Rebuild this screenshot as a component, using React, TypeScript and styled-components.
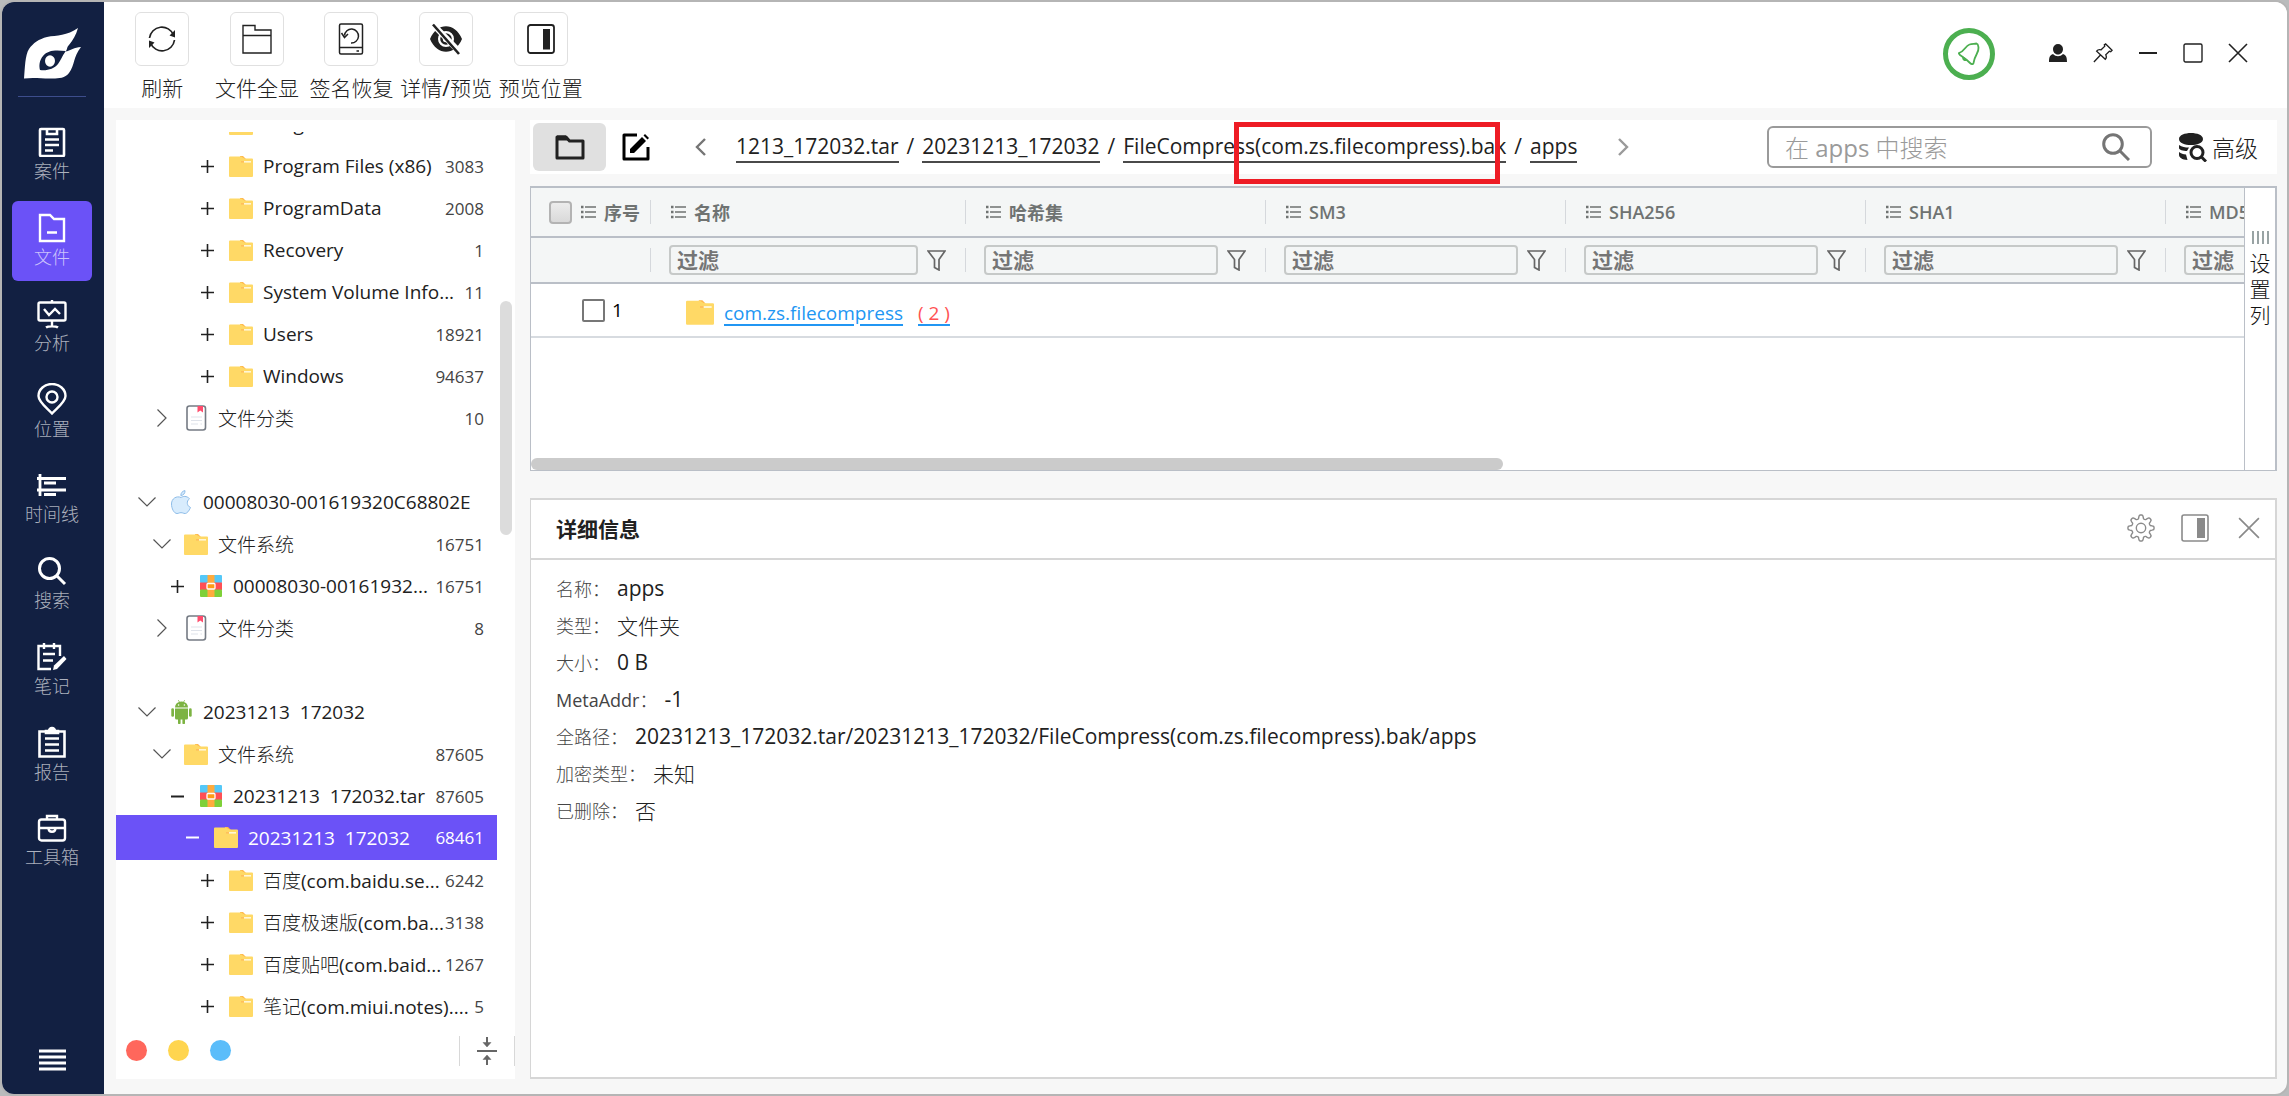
import React from "react";
import styled, { createGlobalStyle, css } from "styled-components";

const Global = createGlobalStyle`
  * { box-sizing: border-box; }
  html, body, #root { height: 100%; margin: 0; }
  body {
    background: #b9bbbc;
    font-family: "Open Sans", "Noto Sans CJK SC Light", "Noto Sans CJK SC", sans-serif;
    font-weight: 400;
    font-size: 19px;
    color: #212121;
  }
  button, input { font: inherit; color: inherit; }
  button { border: 0; background: none; padding: 0; cursor: pointer; }
  svg { display: block; flex: none; }
`;

const Window = styled.div`
  height: 100vh;
  min-height: 1000px;
  border: 2px solid #b5b5b5;
  border-radius: 14px;
  overflow: hidden;
  display: flex;
  background: #f7f7f7;
`;

/* ---------- left navigation ---------- */
const Sidebar = styled.nav`
  width: 102px;
  flex: none;
  padding-right: 2px;
  background: #122042;
  color: #fff;
  display: flex;
  flex-direction: column;
  align-items: center;
`;
const Brand = styled.div`
  width: 68px;
  height: 95px;
  padding: 25px 4px 0 5px;
  border-bottom: 1px solid #3d4d8c;
`;
const NavList = styled.div`
  margin-top: 18px;
  width: 80px;
  height: 766px;
  display: flex;
  flex-direction: column;
  justify-content: space-between;
`;
const NavItem = styled.button<{ $active?: boolean }>`
  height: 80px;
  padding-top: 2px;
  border-radius: 6px;
  display: flex;
  flex-direction: column;
  align-items: center;
  justify-content: center;
  background: ${(p) => (p.$active ? "#6b52f7" : "transparent")};
  color: #fff;
`;
const NavLabel = styled.span`
  font-size: 18px;
  line-height: 28px;
  color: rgba(255, 255, 255, 0.66);
`;
const MenuButton = styled.button`
  margin: auto 0 23px;
  color: #fff;
`;

/* ---------- top bar ---------- */
const Content = styled.div`
  flex: 1;
  min-width: 0;
  display: flex;
  flex-direction: column;
`;
const TopBar = styled.header`
  height: 106px;
  flex: none;
  background: #fff;
  padding: 10px 39px 0 11px;
  display: flex;
  justify-content: space-between;
`;
const Tools = styled.div`
  width: 473px;
  display: grid;
  grid-template-columns: repeat(5, 1fr);
`;
const Tool = styled.button`
  display: flex;
  flex-direction: column;
  align-items: center;
  font-size: 21px;
  line-height: 30px;
  white-space: nowrap;
`;
const ToolBox = styled.span`
  width: 54px;
  height: 54px;
  margin-bottom: 7px;
  border: 1px solid #e0e0e0;
  border-radius: 6px;
  display: grid;
  place-items: center;
`;
const WindowTools = styled.div`
  display: flex;
  align-items: center;
  height: 82px;
  gap: 25px;
`;
const Bell = styled.button`
  width: 52px;
  height: 52px;
  margin: 2px 28px 0 0;
  border: 5px solid #4caf50;
  border-radius: 50%;
  display: grid;
  place-items: center;
  color: #4caf50;
`;
const IconButton = styled.button`
  min-width: 20px;
  display: grid;
  place-items: center;
`;

/* ---------- body ---------- */
const Body = styled.div`
  flex: 1;
  min-height: 0;
  padding: 12px 10px 15px 12px;
  display: flex;
  gap: 15px;
`;
const TreePanel = styled.aside`
  width: 399px;
  flex: none;
  background: #fff;
  padding-top: 12px;
  display: flex;
  flex-direction: column;
`;
const TreeArea = styled.div`
  flex: 1;
  min-height: 0;
  display: flex;
  overflow: hidden;
`;
const TreeList = styled.div`
  width: 381px;
  margin-top: -29px;
`;
const TreeRow = styled.div<{ $level: number; $active?: boolean }>`
  height: 42px;
  padding: 0 13px 0 ${(p) => 22 + p.$level * 15}px;
  display: flex;
  align-items: center;
  white-space: pre;
  ${(p) =>
    p.$active &&
    css`
      height: 45px;
      margin: -2px 0 -1px;
      background: #6b52f7;
      color: #fff;
    `}
`;
const Spacer = styled.div`
  height: 42px;
`;
const Toggle = styled.button`
  width: 18px;
  margin-right: 13px;
  display: grid;
  place-items: center;
`;
const IconSlot = styled.span`
  width: 24px;
  margin-right: 10px;
  display: grid;
  place-items: center;
`;
const Count = styled.span<{ $active?: boolean }>`
  margin-left: auto;
  font-size: 17px;
  color: ${(p) => (p.$active ? "#fff" : "#444")};
`;
const ScrollTrack = styled.div`
  width: 12px;
  margin-left: 3px;
  padding-top: 169px;
`;
const ScrollThumb = styled.div`
  height: 234px;
  border-radius: 6px;
  background: #dcdcdc;
`;
const TreeFooter = styled.div`
  height: 46px;
  flex: none;
  padding: 3px 0 0 10px;
  display: flex;
  align-items: flex-start;
`;
const Dots = styled.div`
  display: flex;
  gap: 21px;
  padding-top: 4px;
`;
const Dot = styled.span<{ $color: string }>`
  width: 21px;
  height: 21px;
  border-radius: 50%;
  background: ${(p) => p.$color};
`;
const Collapse = styled.button`
  margin-left: auto;
  width: 56px;
  height: 30px;
  border: solid #d8d8d8;
  border-width: 0 1px;
  display: grid;
  place-items: center;
`;

const Main = styled.main`
  flex: 1;
  min-width: 0;
  display: flex;
  flex-direction: column;
`;
const PathBar = styled.div`
  position: relative;
  height: 54px;
  flex: none;
  padding: 0 19px 0 3px;
  background: #fff;
  display: flex;
  align-items: center;
`;
const FolderButton = styled.button`
  width: 73px;
  height: 48px;
  border-radius: 6px;
  background: #e0e0e0;
  display: grid;
  place-items: center;
`;
const EditButton = styled(IconButton)`
  margin: 0 40px 0 16px;
`;
const Crumbs = styled.div`
  margin: 0 36px 0 26px;
  display: flex;
  gap: 8px;
  font-size: 21px;
  line-height: 30px;
  white-space: nowrap;
`;
const Crumb = styled.a`
  color: inherit;
  text-decoration: none;
  border-bottom: 2px solid #4a4a4a;
`;
const Marker = styled.div`
  position: absolute;
  left: 704px;
  top: 2px;
  width: 266px;
  height: 62px;
  border: 5px solid #ee1c25;
  z-index: 2;
`;
const SearchBox = styled.label`
  width: 385px;
  height: 42px;
  margin-left: auto;
  padding: 0 20px 0 16px;
  border: 2px solid #9a9a9a;
  border-radius: 6px;
  display: flex;
  align-items: center;
`;
const SearchInput = styled.input`
  flex: 1;
  min-width: 0;
  border: 0;
  padding: 0;
  outline: 0;
  background: none;
  font-size: 24px;
  &::placeholder { color: #9a9a9a; opacity: 1; }
`;
const Advanced = styled.button`
  margin-left: 27px;
  display: flex;
  align-items: center;
  gap: 5px;
  font-size: 23px;
`;

/* ---------- grid ---------- */
const GridPanel = styled.section`
  height: 285px;
  margin: 12px 0 27px;
  flex: none;
  border: solid #babfc7;
  border-width: 2px 2px 1px 1px;
  background: #fff;
  display: flex;
`;
const GridBody = styled.div`
  flex: 1;
  min-width: 0;
  overflow: hidden;
  display: flex;
  flex-direction: column;
`;
const Table = styled.table`
  width: 1935px;
  table-layout: fixed;
  border-collapse: collapse;
`;
const HeadRow = styled.tr<{ $h: number }>`
  height: ${(p) => p.$h}px;
  background: #f4f6f6;
  border-bottom: 2px solid #babfc7;
`;
const Th = styled.th`
  padding: 0;
  font-family: "Open Sans", "Noto Sans CJK SC", sans-serif;
  font-size: 18px;
  font-weight: 600;
  color: #6f7372;
  text-align: left;
`;
const HeadCell = styled.div<{ $first?: boolean }>`
  height: 24px;
  padding-left: ${(p) => (p.$first ? 18 : 20)}px;
  display: flex;
  align-items: center;
  gap: 8px;
  white-space: nowrap;
  border-right: 1px solid #d5d8dc;
`;
const HeadCheck = styled.input`
  appearance: none;
  width: 23px;
  height: 23px;
  margin: 0 1px 0 0;
  border: 2px solid #b3b3b3;
  border-radius: 4px;
  background: linear-gradient(#ececec, #d9d9d9);
`;
const FilterCell = styled.div`
  height: 24px;
  padding: 0 19px 0 18px;
  display: flex;
  align-items: center;
  gap: 9px;
  border-right: 1px solid #d5d8dc;
`;
const FilterInput = styled.input`
  flex: 1;
  min-width: 0;
  height: 30px;
  padding: 0 6px;
  border: 2px solid #c6c9c8;
  border-radius: 4px;
  background: #f4f6f6;
  font-size: 21px;
  font-weight: 700;
  &::placeholder { color: #757575; opacity: 1; font-weight: 700; }
`;
const BodyRow = styled.tr`
  height: 54px;
  border-bottom: 2px solid #d7dbe0;
`;
const Td = styled.td`
  padding: 0;
`;
const IndexCell = styled.label`
  padding-left: 51px;
  display: flex;
  align-items: center;
  gap: 7px;
  color: #000;
  font-size: 19px;
`;
const RowCheck = styled.input`
  appearance: none;
  width: 23px;
  height: 23px;
  margin: 0;
  border: 2px solid #777;
  border-radius: 2px;
  background: #fff;
`;
const NameCell = styled.div`
  padding: 5px 0 0 35px;
  display: flex;
  align-items: center;
  gap: 10px;
  white-space: nowrap;
  font-size: 19px;
`;
const FileLink = styled.a`
  color: #2196f3;
  text-decoration: underline;
  text-decoration-thickness: 2px;
  text-underline-offset: 4px;
`;
const Hits = styled.span`
  margin-left: 5px;
  color: #ff5252;
  text-decoration: underline;
  text-decoration-color: #2196f3;
  text-decoration-thickness: 2px;
  text-underline-offset: 4px;
`;
const HScroll = styled.div`
  margin-top: auto;
  width: 972px;
  height: 12px;
  border-radius: 6px;
  background: #cbcbcb;
`;
const ColumnTab = styled.button`
  width: 31px;
  flex: none;
  padding-top: 43px;
  border-left: 1px solid #babfc7;
  display: flex;
  flex-direction: column;
  align-items: center;
  color: #111;
  font-size: 21px;
`;
const TabText = styled.span`
  width: 21px;
  margin-top: 6px;
  line-height: 26px;
`;

/* ---------- details ---------- */
const Details = styled.section`
  flex: 1;
  min-height: 0;
  border: 2px solid #d6d6d6;
  border-left-width: 1px;
  background: #fff;
`;
const DetailsHead = styled.div`
  height: 60px;
  padding: 0 12px 2px 25px;
  border-bottom: 2px solid #d6d6d6;
  display: flex;
  align-items: center;
  gap: 26px;
  color: #8a8a8a;
`;
const DetailsButton = styled(IconButton)`
  width: 28px;
`;
const Title = styled.h2`
  margin: 0 auto 0 0;
  font-family: "Open Sans", "Noto Sans CJK SC", sans-serif;
  font-size: 21px;
  font-weight: 700;
  color: #212121;
`;
const Fields = styled.dl`
  margin: 0;
  padding: 9px 25px;
`;
const Field = styled.div`
  height: 37px;
  display: flex;
  align-items: center;
  gap: 7px;
`;
const Term = styled.dt`
  font-size: 18px;
  color: #444;
`;
const Value = styled.dd`
  margin: 0;
  font-size: 21px;
`;

/* ---------- drawings ---------- */
type P = { children: React.ReactNode; w?: number; h?: number; box?: string; sw?: number };
const Svg = ({ children, w = 24, h = w, box = "0 0 24 24", sw = 2 }: P) => (
  <svg width={w} height={h} viewBox={box} fill="none" stroke="currentColor" strokeWidth={sw} aria-hidden="true">
    {children}
  </svg>
);

const Logo = () => (
  <Svg w={58} h={52} box="0 0 58 52" sw={0}>
    <path
      fill="#fff"
      fillRule="evenodd"
      d="M55 1C53 8 50 13 46 18C43 21 45 23 42 24.500C48 24 51 20 58 20C50 30 52 38 46 46C42 51 36 51.500 30 51.500C20 52 12 50 1 51.500C2 41 2 28 6 22C10 16 16 12 24 10C34 8 44 9 55 1ZM43 24C32 23 25 23 20 29C16 34 16 39 17 43C24 44 31 42 35 37C38 33 39 29 43 24Z"
    />
    <ellipse cx="27" cy="34" rx="5" ry="5.700" fill="#fff" />
  </Svg>
);

const FolderIcon = ({ w = 24 }: { w?: number }) => (
  <Svg w={w} h={w - 3} box="0 0 24 21" sw={0}>
    <path fill="#ffb74d" d="M11 0h3l3 3h-6z" />
    <path fill="#ffd966" d="M1 .5h11l3.500 2H23a1 1 0 0 1 1 1V20a1 1 0 0 1-1 1H1a1 1 0 0 1-1-1V1.500a1 1 0 0 1 1-1z" />
    <rect x="15" y="5" width="7" height="1.600" fill="#fff6d6" />
    <rect x="12" y="5" width="3" height="1.600" fill="#ffbe5c" />
  </Svg>
);
const ArchiveIcon = () => (
  <Svg w={22} box="0 0 22 22" sw={0}>
    <rect width="22" height="8" rx="1" fill="#55c8f8" />
    <rect y="7.500" width="22" height="7.500" fill="#ff4f55" />
    <rect y="14.500" width="22" height="7.500" rx="1" fill="#7ed038" />
    <rect x="7.500" width="7" height="22" fill="#ffab3d" />
    <rect x="7" y="8.500" width="8" height="5.500" rx="1" fill="#ff9b17" stroke="#fff" strokeWidth="1.300" />
  </Svg>
);
const BookIcon = () => (
  <Svg w={21} h={26} box="0 0 21 26" sw={1.6}>
    <rect x="1" y="1" width="18.500" height="24" rx="2.500" stroke="#757b84" fill="#fff" />
    <path d="M11.500 1h5.500v6.500l-2.750-2-2.750 2z" fill="#ff4d6d" stroke="none" />
    <path d="M5 12h11M5 15.500h11M5 19h7M14.500 19H16" stroke="#dfe3ea" strokeWidth="1" />
  </Svg>
);
const AppleIcon = () => (
  <Svg w={20} h={24} box="0 0 20 24" sw={1}>
    <path
      fill="#d8ecfd"
      stroke="#8dbce8"
      d="M10 7.500c2-1.300 5.500-2 8.500 1.200-3.400 2.500-2.700 7.200 1 8.800-1.500 3.500-3.500 6-5.500 6-1.500 0-2-.8-4-.8s-2.500.8-4 .8C3 23.500.5 18.500.5 14c0-5.500 5-8.500 9.500-6.500zM9.800 5.500C9.800 3 11.500 1 14 .6 14.200 3.200 12.500 5.400 9.800 5.500z"
    />
  </Svg>
);
const AndroidIcon = () => (
  <Svg w={21} h={24} box="0 0 21 24" sw={0}>
    <g fill="#7cb342">
      <path d="M4 7.500C4 4.500 6 2.600 8 2L7 .3l.6-.3 1 1.700a7 7 0 0 1 3.800 0l1-1.700.6.300L13 2c2 .6 4 2.500 4 5.500z" />
      <path d="M4 8.500h13V18a1.500 1.500 0 0 1-1.500 1.500H14V23a1.300 1.300 0 0 1-2.600 0v-3.500H9.600V23A1.300 1.300 0 0 1 7 23v-3.500H5.500A1.500 1.500 0 0 1 4 18z" />
      <rect x=".3" y="8.300" width="2.700" height="8.500" rx="1.300" />
      <rect x="18" y="8.300" width="2.700" height="8.500" rx="1.300" />
    </g>
    <circle cx="7.600" cy="5" r=".8" fill="#fff" />
    <circle cx="13.400" cy="5" r=".8" fill="#fff" />
  </Svg>
);
const iconFor: Record<string, React.ReactNode> = {
  folder: <FolderIcon />,
  archive: <ArchiveIcon />,
  book: <BookIcon />,
  apple: <AppleIcon />,
  android: <AndroidIcon />,
};
const toggles: Record<string, React.ReactNode> = {
  plus: <Svg w={13} box="0 0 13 13" sw={1.6}><path d="M0 6.500h13M6.500 0v13" /></Svg>,
  minus: <Svg w={13} box="0 0 13 13" sw={2}><path d="M0 6.500h13" /></Svg>,
  open: <Svg w={18} h={10} box="0 0 18 10" sw={1.2}><path d="M.5.5 9 9 17.500.5" stroke="#555" /></Svg>,
  closed: <Svg w={10} h={18} box="0 0 10 18" sw={1.2}><path d="M.5.5 9 9 .5 17.500" stroke="#555" /></Svg>,
};

const navItems = [
  { label: "案件", icon: <Svg w={30} box="0 0 30 30" sw={2.6}><rect x="3" y="2" width="24" height="27" rx="1" /><path d="M10 2v5h10V2M8 12.500h14M8 18h14M8 23.500h8" /></Svg> },
  { label: "文件", active: true, icon: <Svg w={30} box="0 0 30 30" sw={2.4}><path d="M3 28V2h10l4 4h10v22zM10 19.500h10" /></Svg> },
  { label: "分析", icon: <Svg w={30} box="0 0 30 30" sw={2.4}><rect x="1.500" y="3.500" width="27" height="18" rx="1.500" /><path d="M15 1v2M15 22v5M9 28.500c2-1.500 10-1.500 12 0M7 10l5 6 6-6 5 5" /></Svg> },
  { label: "位置", icon: <Svg w={30} h={32} box="0 0 30 32" sw={2.4}><path d="M15 30.500C10 25 1.500 19 1.500 13a13.500 12 0 0 1 27 0C28.500 19 20 25 15 30.500z" /><circle cx="15" cy="14" r="5.500" /></Svg> },
  { label: "时间线", icon: <Svg w={30} box="0 0 30 30" sw={2.8}><path d="M3 4v22M0 8.500h29M7 13h12M0 20h29M7 24.500h12" /></Svg> },
  { label: "搜索", icon: <Svg w={30} box="0 0 30 30" sw={3}><circle cx="12.500" cy="12.500" r="10" /><path d="M19.500 19.500 28 28" /></Svg> },
  { label: "笔记", icon: <Svg w={30} box="0 0 30 30" sw={2.4}><path d="M14 27H1.500V4H23v10M7 1v6M17 1v6M6 12h12M6 18.500h10" /><path d="m16 28 1-4.500L27 14l2.500 3L20 27z" fill="currentColor" strokeWidth="0" /></Svg> },
  { label: "报告", icon: <Svg w={30} h={32} box="0 0 30 32" sw={2.6}><path d="M8 5.500H2.500V30.500h25V5.500H22M8 12.500h14M8 18.500h14M8 24.500h14" /><path d="M9 7V5h3a3 3 0 0 1 6 0h3v2z" fill="currentColor" /></Svg> },
  { label: "工具箱", icon: <Svg w={30} box="0 0 30 30" sw={2.4}><rect x="2" y="6.500" width="26" height="21" rx="2.500" /><path d="M10 6V3h10v3M2 15h26M11.500 15c0 5 7 5 7 0" /></Svg> },
];

const tools = [
  { label: "刷新", icon: <Svg w={28} h={30} box="0 0 28 30" sw={1.7}><path d="M1.500 14A12.500 12.500 0 0 1 25.500 11M26.500 16A12.500 12.500 0 0 1 2.500 19" /><path d="M27 6v7.500L21.500 11.500zM1 24v-7.500l5.500 2z" fill="currentColor" strokeWidth="0" /></Svg> },
  { label: "文件全显", icon: <Svg w={30} box="0 0 30 30" sw={1.4}><path d="M1 29V1.500h12V6h16v23zM1 11.500h28" /></Svg> },
  { label: "签名恢复", icon: <Svg w={26} h={32} box="0 0 26 32" sw={1.5}><rect x="1.500" y="1" width="23" height="30" rx="1.500" /><path d="M1.500 24.500h23M6.500 12.500a7 7 0 1 1 6.500 7.500M3.500 10l3 4.500L10 11M18.500 28H21" /></Svg> },
  { label: "详情/预览", icon: <Svg w={34} h={32} box="0 0 34 32" sw={2.6}><path fill="currentColor" fillRule="evenodd" stroke="none" d="M1 16C8-1 26-1 33 16 26 33 8 33 1 16zM17 8a8 8 0 1 0 0 16 8 8 0 1 0 0-16z" /><circle cx="17" cy="16" r="4.500" /><path d="M4 1.500 32 30.500" stroke="#fff" strokeWidth="6" /><path d="M4 1.500 30 31" /></Svg> },
  { label: "预览位置", icon: <Svg w={28} h={30} box="0 0 28 30" sw={1.8}><rect x="1" y="1" width="26" height="28" rx="2.500" /><rect x="16" y="5" width="7" height="20.500" fill="currentColor" strokeWidth="0" /></Svg> },
];

type Node = { level: number; t: string; icon: string; name: string; count?: string; active?: boolean };
const tree: (Node | null)[] = [
  { level: 4, t: "plus", icon: "folder", name: "Program Files" },
  { level: 4, t: "plus", icon: "folder", name: "Program Files (x86)", count: "3083" },
  { level: 4, t: "plus", icon: "folder", name: "ProgramData", count: "2008" },
  { level: 4, t: "plus", icon: "folder", name: "Recovery", count: "1" },
  { level: 4, t: "plus", icon: "folder", name: "System Volume Info...", count: "11" },
  { level: 4, t: "plus", icon: "folder", name: "Users", count: "18921" },
  { level: 4, t: "plus", icon: "folder", name: "Windows", count: "94637" },
  { level: 1, t: "closed", icon: "book", name: "文件分类", count: "10" },
  null,
  { level: 0, t: "open", icon: "apple", name: "00008030-001619320C68802E" },
  { level: 1, t: "open", icon: "folder", name: "文件系统", count: "16751" },
  { level: 2, t: "plus", icon: "archive", name: "00008030-00161932...", count: "16751" },
  { level: 1, t: "closed", icon: "book", name: "文件分类", count: "8" },
  null,
  { level: 0, t: "open", icon: "android", name: "20231213  172032" },
  { level: 1, t: "open", icon: "folder", name: "文件系统", count: "87605" },
  { level: 2, t: "minus", icon: "archive", name: "20231213  172032.tar", count: "87605" },
  { level: 3, t: "minus", icon: "folder", name: "20231213  172032", count: "68461", active: true },
  { level: 4, t: "plus", icon: "folder", name: "百度(com.baidu.se...", count: "6242" },
  { level: 4, t: "plus", icon: "folder", name: "百度极速版(com.ba...", count: "3138" },
  { level: 4, t: "plus", icon: "folder", name: "百度贴吧(com.baid...", count: "1267" },
  { level: 4, t: "plus", icon: "folder", name: "笔记(com.miui.notes)....", count: "5" },
];

const columns = ["名称", "哈希集", "SM3", "SHA256", "SHA1", "MD5"];
const crumbs = ["1213_172032.tar", "20231213_172032", "FileCompress(com.zs.filecompress).bak", "apps"];
const fields = [
  ["名称", "apps"],
  ["类型", "文件夹"],
  ["大小", "0 B"],
  ["MetaAddr", "-1"],
  ["全路径", "20231213_172032.tar/20231213_172032/FileCompress(com.zs.filecompress).bak/apps"],
  ["加密类型", "未知"],
  ["已删除", "否"],
];

const ListIcon = () => (
  <Svg w={15} h={14} box="0 0 15 14" sw={1.6}>
    <path d="M4 2h11M4 7h11M4 12h11" />
    <path d="M0 2h2.500M0 7h2.500M0 12h2.500" strokeWidth="2.400" />
  </Svg>
);
const Funnel = () => (
  <Svg w={19} h={21} box="0 0 19 21" sw={1.7}>
    <path d="M1 1h17l-6 8.500V20l-4.500-2.500v-8z" stroke="#666" />
  </Svg>
);
const CloseIcon = ({ w, sw }: { w: number; sw: number }) => (
  <Svg w={w} box="0 0 20 20" sw={sw}><path d="M1 1l18 18M19 1 1 19" /></Svg>
);
const GearIcon = () => {
  const pts: string[] = [];
  for (let i = 0; i < 96; i++) {
    const a = (i / 96) * Math.PI * 2;
    const r = 11.2 + 1.9 * Math.tanh(2.2 * Math.cos(8 * a));
    pts.push(`${(14 + r * Math.sin(a)).toFixed(2)},${(14 - r * Math.cos(a)).toFixed(2)}`);
  }
  return (
    <Svg w={28} box="0 0 28 28" sw={1.4}>
      <polygon points={pts.join(" ")} />
      <circle cx="14" cy="14" r="4.700" />
    </Svg>
  );
};

export default function App() {
  return (
    <>
      <Global />
      <Window>
        <Sidebar>
          <Brand><Logo /></Brand>
          <NavList>
            {navItems.map((n) => (
              <NavItem key={n.label} $active={n.active}>
                {n.icon}
                <NavLabel>{n.label}</NavLabel>
              </NavItem>
            ))}
          </NavList>
          <MenuButton aria-label="菜单">
            <Svg w={27} h={22} box="0 0 27 22" sw={3}><path d="M0 2h27M0 8h27M0 14h27M0 20h27" /></Svg>
          </MenuButton>
        </Sidebar>

        <Content>
          <TopBar>
            <Tools>
              {tools.map((t) => (
                <Tool key={t.label}>
                  <ToolBox>{t.icon}</ToolBox>
                  {t.label}
                </Tool>
              ))}
            </Tools>
            <WindowTools>
              <Bell aria-label="通知">
                <Svg w={24} box="0 0 24 24" sw={1.8}>
                  <path strokeLinejoin="round" d="M2 11C8 9 8 4 12.500 2.500C15 1.500 17 2 19.500 1.500C21.500 2 21 4 21.500 5.500C22 11 18 12 16.500 21C16 23 14 22 12.500 20.500C9 17 6 15 3 13C2 12 1.500 11.500 2 11z" />
                  <path d="M6 15.500c0 2 1.500 3 3.500 2.500z" fill="currentColor" />
                </Svg>
              </Bell>
              <IconButton aria-label="用户">
                <Svg w={20} box="0 0 20 20" sw={0}><path fill="currentColor" d="M10 1a5 5 0 0 0-5 5c0 3 2 5.500 5 5.500S15 9 15 6a5 5 0 0 0-5-5zM5 11c-3 1-4 3-4 8h18c0-5-1-7-4-8-3 3-7 3-10 0z" /></Svg>
              </IconButton>
              <IconButton aria-label="置顶">
                <Svg w={20} box="0 0 22 22" sw={1.5}><path d="M14 1l7 7-1.500 1.500-1.500-.5-4 4c1 2 .5 4-.5 5L4 9c1-1.500 3-2 5-1.500l4-4L12.500 2zM8.500 13 1 21" /></Svg>
              </IconButton>
              <IconButton aria-label="最小化">
                <Svg w={18} box="0 0 18 18" sw={1.8}><path d="M0 9h18" /></Svg>
              </IconButton>
              <IconButton aria-label="最大化">
                <Svg w={20} box="0 0 20 20" sw={1.4}><rect x="1" y="1" width="18" height="18" rx="1.500" /></Svg>
              </IconButton>
              <IconButton aria-label="关闭"><CloseIcon w={20} sw={1.6} /></IconButton>
            </WindowTools>
          </TopBar>

          <Body>
            <TreePanel>
              <TreeArea>
                <TreeList>
                  {tree.map((n, i) =>
                    n ? (
                      <TreeRow key={i} $level={n.level} $active={n.active}>
                        <Toggle aria-label="展开或折叠">{toggles[n.t]}</Toggle>
                        <IconSlot>{iconFor[n.icon]}</IconSlot>
                        {n.name}
                        {n.count && <Count $active={n.active}>{n.count}</Count>}
                      </TreeRow>
                    ) : (
                      <Spacer key={i} />
                    )
                  )}
                </TreeList>
                <ScrollTrack><ScrollThumb /></ScrollTrack>
              </TreeArea>
              <TreeFooter>
                <Dots>
                  <Dot $color="#ff675c" />
                  <Dot $color="#ffd54f" />
                  <Dot $color="#5bbdfa" />
                </Dots>
                <Collapse aria-label="全部折叠">
                  <Svg w={20} h={28} box="0 0 20 28" sw={2}>
                    <g stroke="#666"><path d="M0 14h20M10 0v6M10 22v6" /><path d="M6 5.500h8L10 10zM6 22.500h8L10 18z" fill="#666" strokeWidth="0.500" /></g>
                  </Svg>
                </Collapse>
              </TreeFooter>
            </TreePanel>

            <Main>
              <PathBar>
                <FolderButton aria-label="目录">
                  <Svg w={30} h={26} box="0 0 30 26" sw={3}><path d="M2 24V3h9l3.500 4H28v17z" strokeLinejoin="round" /><path d="M2 2h9l3 4H2z" fill="currentColor" strokeWidth="1" /></Svg>
                </FolderButton>
                <EditButton aria-label="编辑">
                  <Svg w={28} box="0 0 28 28" sw={3}>
                    <g stroke="#000"><path d="M15 2H2v24h24V14" strokeLinejoin="round" /><path d="M8 20v-4L20 4l4 4-12 12zM21.500 2.500 23 1l4 4-1.500 1.500z" fill="#000" strokeWidth="0" /></g>
                  </Svg>
                </EditButton>
                <IconButton aria-label="后退"><Svg w={11} h={18} box="0 0 11 18" sw={2.4}><path d="M10 1 2 9l8 8" stroke="#757575" /></Svg></IconButton>
                <Crumbs>
                  {crumbs.map((c, i) => (
                    <React.Fragment key={c}>
                      {i > 0 && <span>/</span>}
                      <Crumb href="#">{c}</Crumb>
                    </React.Fragment>
                  ))}
                </Crumbs>
                <IconButton aria-label="前进"><Svg w={11} h={18} box="0 0 11 18" sw={2.4}><path d="m1 1 8 8-8 8" stroke="#9a9a9a" /></Svg></IconButton>
                <Marker />
                <SearchBox>
                  <SearchInput aria-label="搜索" placeholder="在 apps 中搜索" />
                  <Svg w={28} box="0 0 28 28" sw={3}><g stroke="#757575"><circle cx="11" cy="11" r="9.300" /><path d="m17.500 17.500 9.500 9.500" /></g></Svg>
                </SearchBox>
                <Advanced>
                  <Svg w={28} h={29} box="0 0 28 29" sw={3}>
                    <path fill="currentColor" stroke="none" d="M0 6C0-2 24-2 24 6S0 14 0 6zM0 12c3 2 6 2.500 10 2.500L8 18c-4 0-8-1-8-3zM0 19c2 1.500 4 2.500 7 2.500L8.500 27C3 27 0 24 0 22z" />
                    <circle cx="18" cy="19.500" r="6" /><path d="m22 23.500 5 5" />
                  </Svg>
                  高级
                </Advanced>
              </PathBar>

              <GridPanel>
                <GridBody>
                  <Table>
                    <colgroup>
                      <col style={{ width: 120 }} />
                      {columns.map((c, i) => <col key={c} style={{ width: i ? 300 : 315 }} />)}
                    </colgroup>
                    <thead>
                      <HeadRow $h={49}>
                        <Th>
                          <HeadCell $first><HeadCheck type="checkbox" aria-label="全选" /><ListIcon />序号</HeadCell>
                        </Th>
                        {columns.map((c) => <Th key={c}><HeadCell><ListIcon />{c}</HeadCell></Th>)}
                      </HeadRow>
                      <HeadRow $h={46}>
                        <Th><FilterCell /></Th>
                        {columns.map((c) => (
                          <Th key={c}>
                            <FilterCell><FilterInput placeholder="过滤" aria-label={`过滤${c}`} /><Funnel /></FilterCell>
                          </Th>
                        ))}
                      </HeadRow>
                    </thead>
                    <tbody>
                      <BodyRow>
                        <Td><IndexCell><RowCheck type="checkbox" />1</IndexCell></Td>
                        <Td>
                          <NameCell>
                            <FolderIcon w={28} />
                            <FileLink href="#">com.zs.filecompress</FileLink>
                            <Hits>( 2 )</Hits>
                          </NameCell>
                        </Td>
                        <Td colSpan={5} />
                      </BodyRow>
                    </tbody>
                  </Table>
                  <HScroll />
                </GridBody>
                <ColumnTab>
                  <Svg w={17} h={13} box="0 0 17 13" sw={1.6}><path d="M1 0v13M6 0v13M11 0v13M16 0v13" stroke="#7f8c8d" /></Svg>
                  <TabText>设置列</TabText>
                </ColumnTab>
              </GridPanel>

              <Details>
                <DetailsHead>
                  <Title>详细信息</Title>
                  <DetailsButton aria-label="设置"><GearIcon /></DetailsButton>
                  <DetailsButton aria-label="预览位置">
                    <Svg w={28} box="0 0 28 28" sw={1.6}><rect x="1" y="1" width="26" height="26" rx="2" /><rect x="16" y="4" width="8" height="20" fill="currentColor" strokeWidth="0" /></Svg>
                  </DetailsButton>
                  <DetailsButton aria-label="关闭详细信息"><CloseIcon w={22} sw={1.5} /></DetailsButton>
                </DetailsHead>
                <Fields>
                  {fields.map(([k, v]) => (
                    <Field key={k}><Term>{k}：</Term><Value>{v}</Value></Field>
                  ))}
                </Fields>
              </Details>
            </Main>
          </Body>
        </Content>
      </Window>
    </>
  );
}
